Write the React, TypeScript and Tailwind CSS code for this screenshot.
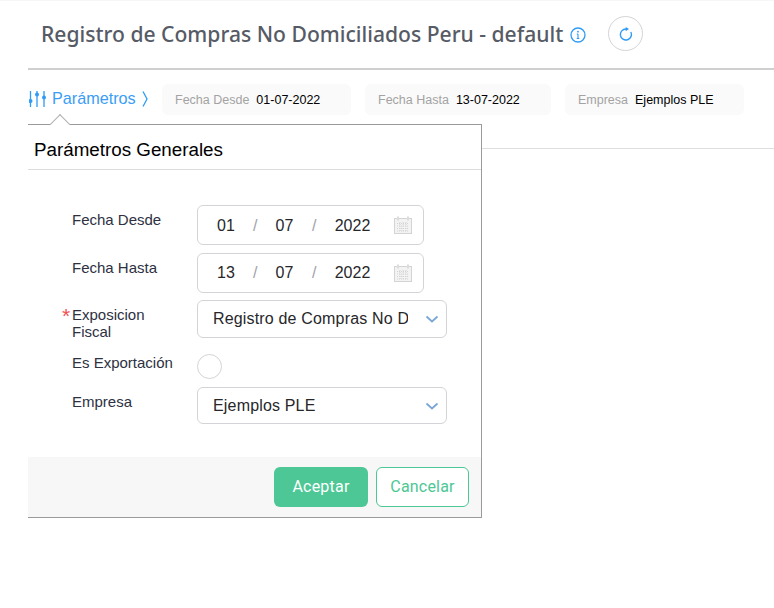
import React from "react";

const sans = "font-['Liberation_Sans',Arial,sans-serif]";

function Calendar() {
  return (
    <svg width="18" height="18" viewBox="0 0 18 18" className="shrink-0" fill="none">
      <rect x="0.5" y="2.5" width="17" height="15" fill="#f3f3f3" stroke="#d4d4d4" />
      <rect x="3" y="0.5" width="2" height="4" fill="#dcdcdc" />
      <rect x="13" y="0.5" width="2" height="4" fill="#dcdcdc" />
      <path d="M3 7.5h12M3 10h12M3 12.5h12M3 15h12M6 6v10M9 6v10M12 6v10" stroke="#d2d2d2" strokeWidth="1" strokeDasharray="1 1" />
    </svg>
  );
}

function Chevron() {
  return (
    <svg width="14" height="8" viewBox="0 0 14 8" fill="none" className="shrink-0">
      <path d="M1.5 1.5 7 6.5l5.5-5" stroke="#7aa7d6" strokeWidth="1.8" />
    </svg>
  );
}

function DateField({ d, m, y, textClass }: { d: string; m: string; y: string; textClass: string }) {
  return (
    <div className="ml-[44px] flex h-10 w-[227px] items-center rounded-md border border-[#d4d4d8] pr-[11px] text-[16px] text-[#27272a]">
      <div className={`flex items-center ${textClass}`}>
        <span className="w-[55px] pl-px text-center">{d}</span>
        <span className="w-[3px] text-center text-[#a1a1aa]">/</span>
        <span className="w-[56px] pl-px text-center">{m}</span>
        <span className="w-[3px] text-center text-[#a1a1aa]">/</span>
        <span className="w-[75px] text-center">{y}</span>
      </div>
      <span className="ml-auto flex"><Calendar /></span>
    </div>
  );
}

function Select({ value, className }: { value: string; className: string }) {
  return (
    <div className={`ml-[44px] flex w-[250px] items-center rounded-md border border-[#d4d4d8] pl-[15px] pr-[7px] text-[16px] tracking-[0.17px] text-[#27272a] ${className}`}>
      <span className="h-[20px] w-[195px] overflow-hidden whitespace-nowrap leading-[20px]">{value}</span>
      <span className="ml-auto flex"><Chevron /></span>
    </div>
  );
}

function Chip({ label, value, className }: { label: string; value: string; className: string }) {
  return (
    <div className={`flex h-[31px] items-center rounded-md bg-[#fafafa] pl-[13px] pt-px text-[12.5px] ${className}`}>
      <span className="text-[#a3a3a3]">{label}</span>
      <span className="text-black">{value}</span>
    </div>
  );
}

function Label({ children, className }: { children: React.ReactNode; className: string }) {
  return <div className={`w-[125px] whitespace-nowrap pl-[44px] text-[15px] leading-[17px] text-[#2d3142] ${className}`}>{children}</div>;
}

export default function App() {
  return (
    <div className={`relative h-[608px] w-[774px] overflow-hidden bg-white ${sans}`}>
      <div className="h-px bg-[#f7f7f7]" />
      <div className="ml-[28px] flex h-[69px] items-center border-b-2 border-[#cfcfcf] pb-[2px]">
        <h1 className="ml-[13px] whitespace-nowrap font-['Noto_Sans',sans-serif] text-[21.100px] font-medium text-[#565b66]">
          Registro de Compras No Domiciliados Peru - default
        </h1>
        <svg width="16" height="16" viewBox="0 0 16 16" fill="none" className="ml-[7px] mt-[2px] shrink-0">
          <circle cx="8" cy="8" r="7" stroke="#2f9bf4" strokeWidth="1.3" />
          <path d="M8 7v4.500M6.700 11.500h2.600M6.800 7H8" stroke="#2f9bf4" strokeWidth="1.100" />
          <circle cx="8" cy="4.700" r="0.900" fill="#2f9bf4" />
        </svg>
        <button className="ml-[22px] flex h-[35px] w-[35px] items-center justify-center rounded-full border border-[#d4d4d4] bg-white">
          <svg width="14" height="14" viewBox="0 0 14 14" fill="none">
            <path d="M11.800 5A5.500 5.500 0 1 1 7 2" stroke="#2f9bf4" strokeWidth="1.400" />
            <path d="M6.700 0v4.200L10 2z" fill="#2f9bf4" />
          </svg>
        </button>
      </div>

      <div className="ml-[28px] flex h-[79px] items-start border-b border-[#dedede] pt-[14px]">
        <div className="ml-px flex h-[29px] w-[133px] items-center text-[16.200px] text-[#3b9df5]">
          <svg width="17" height="18" viewBox="0 0 17 18" fill="none" className="shrink-0">
            <path d="M1.500 1v16M8 1v16M15 1v16" stroke="#2f9bf4" strokeWidth="1.300" />
            <circle cx="1.500" cy="11" r="2" fill="#2f9bf4" />
            <circle cx="8" cy="4.500" r="2" fill="#2f9bf4" />
            <circle cx="15" cy="7.500" r="2" fill="#2f9bf4" />
          </svg>
          <span className="ml-[6px]">Parámetros</span>
          <svg width="6" height="16" viewBox="0 0 6 16" fill="none" className="ml-[6px]">
            <path d="M1 0.500l4 7.500-4 7.500" stroke="#2f9bf4" strokeWidth="1.300" />
          </svg>
        </div>
        <Chip label="Fecha Desde" value="01-07-2022" className="w-[189px] gap-[7px]" />
        <Chip label="Fecha Hasta" value="13-07-2022" className="ml-[14px] w-[186px] gap-[7px]" />
        <Chip label="Empresa" value="Ejemplos PLE" className="ml-[14px] w-[179px] gap-[7px]" />
      </div>

      <div className="absolute left-[28px] top-[124px] w-[454px] border-y border-r border-[#9a9a9a] bg-white">
        <div className="absolute left-[25px] top-[-8px] h-[14px] w-[14px] rotate-45 border-l border-t border-[#b0b0b0] bg-white" />
        <div className="relative flex h-[45px] items-center border-b border-[#dcdcdc] pl-[6px] pt-[6px] text-[18.800px] text-black">
          Parámetros Generales
        </div>
        <div className="h-[287px] pt-[35px]">
          <div className="flex items-start">
            <Label className="pt-[6px]">Fecha Desde</Label>
            <DateField d="01" m="07" y="2022" textClass="pt-px" />
          </div>
          <div className="mt-[8px] flex items-start">
            <Label className="pt-[6px]">Fecha Hasta</Label>
            <DateField d="13" m="07" y="2022" textClass="pb-px" />
          </div>
          <div className="relative mt-[7px] flex items-start">
            <span className="absolute left-[34px] top-[7px] text-[21px] leading-[18px] text-[#f05252]">*</span>
            <Label className="pt-[6px]">Exposicion<br />Fiscal</Label>
            <Select value="Registro de Compras No Domiciliados" className="h-[38px]" />
          </div>
          <div className="mt-[14px] flex items-start">
            <Label>Es Exportación</Label>
            <div className="ml-[44px] h-[25px] w-[25px] rounded-full border border-[#d4d4d4] bg-white" />
          </div>
          <div className="mt-[8px] flex items-start">
            <Label className="pt-[6px]">Empresa</Label>
            <Select value="Ejemplos PLE" className="h-[37px]" />
          </div>
        </div>
        <div className="flex h-[60px] items-start justify-end gap-2 bg-[#f7f7f7] pr-[12px] pt-[10px] font-['Roboto',sans-serif] text-[16px] tracking-[0.2px]">
          <button className="h-10 w-[94px] rounded-md bg-[#4cc795] text-white">Aceptar</button>
          <button className="h-10 w-[93px] rounded-md border border-[#4cc795] bg-white text-[#4cc795]">Cancelar</button>
        </div>
      </div>
    </div>
  );
}
